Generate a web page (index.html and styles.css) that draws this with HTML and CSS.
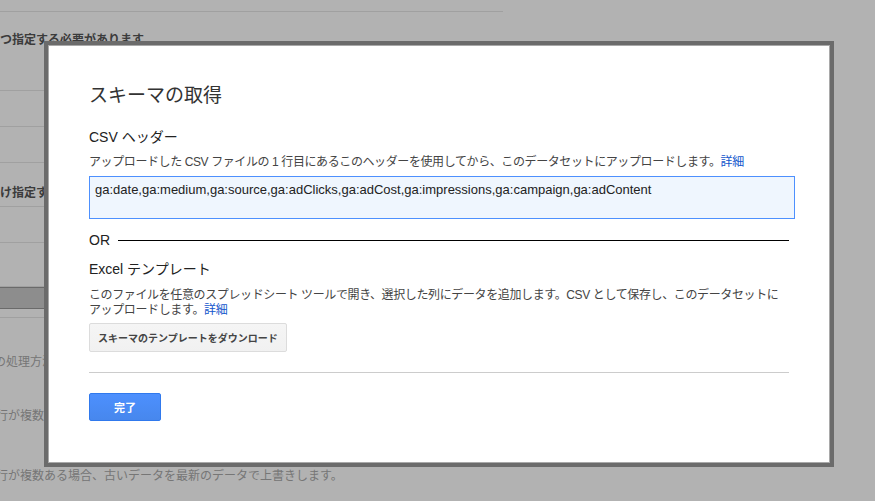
FILE: index.html
```html
<!DOCTYPE html>
<html lang="ja">
<head>
    <meta charset="UTF-8">
    <meta name="viewport" content="width=device-width, initial-scale=1.0">
    <title>スキーマの取得</title>
    <link rel="stylesheet" href="styles.css">
</head>
<body>
    <div id="page">
        <div class="row row-top"></div>
        <div class="row row-tall"><p class="bold-note">つ指定する必要があります。</p></div>
        <div class="row"></div>
        <div class="row"></div>
        <div class="row row-mid"><p class="bold-note">け指定する必要があります。</p></div>
        <div class="row"></div>
        <div class="row row-mid"></div>
        <div class="band"></div>
        <div class="row row-thin"></div>
        <p class="light-note first">の処理方法</p>
        <p class="light-note cut">行が複数ある場合</p>
        <p class="light-note cut last">行が複数ある場合、古いデータを最新のデータで上書きします。</p>
    </div>

    <div id="overlay"></div>

    <div id="dialog">
        <h1 class="dialog-title">スキーマの取得</h1>

        <h2 class="section-title">CSV ヘッダー</h2>
        <p class="hint">アップロードした CSV ファイルの 1 行目にあるこのヘッダーを使用してから、このデータセットにアップロードします。<a href="#">詳細</a></p>
        <textarea class="header-box" readonly>ga:date,ga:medium,ga:source,ga:adClicks,ga:adCost,ga:impressions,ga:campaign,ga:adContent</textarea>

        <div class="or-row">
            <span>OR</span>
            <div class="or-line"></div>
        </div>

        <h2 class="section-title excel">Excel テンプレート</h2>
        <p class="hint wrap">このファイルを任意のスプレッドシート ツールで開き、選択した列にデータを追加します。CSV として保存し、このデータセットにアップロードします。<a href="#">詳細</a></p>
        <button class="btn-grey">スキーマのテンプレートをダウンロード</button>

        <div class="divider"></div>

        <button class="btn-blue">完了</button>
    </div>
</body>
</html>
```

FILE: styles.css
```css
body {
    margin: 0;
    width: 875px;
    height: 501px;
    overflow: hidden;
    background: #fff;
    font-family: "Liberation Sans", Arial, "Noto Sans CJK JP", sans-serif;
    position: relative;
}

/* page behind the dialog */
#page {
    width: 503px;
}
.row {
    height: 35px;
    border-bottom: 1px solid #e5e5e5;
}
.row-top {
    height: 11px;
}
.row-tall {
    height: 78px;
}
.row-mid {
    height: 43px;
}
.row-thin {
    height: 8px;
}
.bold-note {
    margin: 0;
    font-size: 12px;
    font-weight: bold;
    color: #555;
    line-height: 16px;
    white-space: nowrap;
}
.row-tall .bold-note {
    padding-top: 20px;
}
.row-mid .bold-note {
    padding-top: 22px;
}
.band {
    height: 20px;
    background: #cbcbcb;
    border-top: 1px solid #999;
    border-bottom: 1px solid #999;
}
.light-note {
    margin: 0;
    font-size: 12px;
    line-height: 16px;
    color: #aaa;
    white-space: nowrap;
}
.light-note.first {
    margin-top: 36px;
    margin-left: -6px;
}
.light-note.cut {
    margin-left: -4px;
}
.light-note.first + .light-note {
    margin-top: 38px;
}
.light-note.last {
    margin-top: 44px;
}

#overlay {
    position: absolute;
    inset: 0;
    background: rgba(0, 0, 0, 0.3);
}

/* dialog */
#dialog {
    position: absolute;
    left: 44px;
    top: 41px;
    width: 700px;
    height: 378px;
    padding: 38px 40px 0;
    background: #fff;
    border: 1px solid #a9a9a9;
    outline: 4px solid #6b6b6b;
    margin: 4px;
    color: #222;
}
.dialog-title {
    margin: 0;
    font-size: 19px;
    font-weight: normal;
    line-height: 24px;
    color: #333;
}
.section-title {
    margin: 20px 0 0;
    font-size: 14px;
    font-weight: normal;
    line-height: 18px;
    color: #222;
}
.section-title.excel {
    margin-top: 11px;
}
.hint {
    margin: 8px 0 0;
    font-size: 12px;
    line-height: 16px;
    letter-spacing: -0.4px;
    color: #444;
}
.hint.wrap {
    margin-top: 10px;
    line-height: 15px;
    letter-spacing: -0.38px;
    line-break: anywhere;
}
.hint a {
    color: #15c;
    text-decoration: none;
}
.header-box {
    display: block;
    margin-top: 6px;
    width: 694px;
    height: 33px;
    padding: 5px 5px 3px;
    border: 1px solid #4d90fe;
    background: #eff6fe;
    font-family: "Liberation Sans", Arial, sans-serif;
    font-size: 13px;
    line-height: 16px;
    color: #222;
    resize: none;
    outline: none;
}
.or-row {
    display: flex;
    align-items: center;
    gap: 8px;
    margin-top: 12px;
    height: 18px;
    font-size: 14px;
    color: #222;
}
.or-line {
    flex: 1;
    height: 1px;
    background: #000;
}
.btn-grey {
    display: block;
    margin-top: 5px;
    height: 29px;
    padding: 0 8px;
    border: 1px solid #dcdcdc;
    border-radius: 2px;
    background: linear-gradient(#f5f5f5, #f1f1f1);
    font-family: "Liberation Sans", Arial, "Noto Sans CJK JP", sans-serif;
    font-size: 10px;
    font-weight: bold;
    color: #444;
}
.divider {
    margin-top: 20px;
    height: 1px;
    background: #ccc;
}
.btn-blue {
    display: block;
    margin-top: 20px;
    width: 72px;
    height: 28px;
    border: 1px solid #3079ed;
    border-radius: 2px;
    background: linear-gradient(#4d90fe, #4787ed);
    font-family: "Liberation Sans", Arial, "Noto Sans CJK JP", sans-serif;
    font-size: 11px;
    font-weight: bold;
    color: #fff;
}
```
